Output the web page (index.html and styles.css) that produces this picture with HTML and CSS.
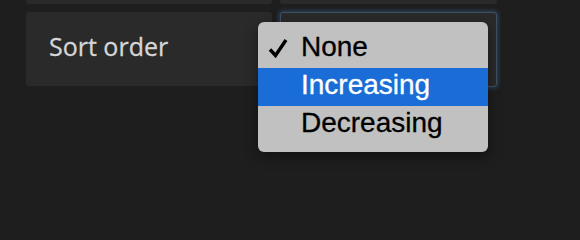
FILE: index.html
```html
<!DOCTYPE html>
<html>
<head>
<meta charset="utf-8">
<link rel="stylesheet" href="styles.css">
</head>
<body>
<div class="grid">
  <div class="panel top"></div>
  <div class="panel top"></div>
  <div class="panel field"><span class="label">Sort order</span></div>
  <div class="select"></div>
</div>
<div class="menu">
  <div class="item checked">
    <svg class="check" width="20" height="20" viewBox="0 0 20 20"><path d="M2 11.5 L7.5 17.5 L18 2" fill="none" stroke="#000" stroke-width="3.4" stroke-linecap="butt" stroke-linejoin="miter"/></svg>
    None
  </div>
  <div class="item active">Increasing</div>
  <div class="item">Decreasing</div>
</div>
</body>
</html>
```
FILE: styles.css
```css
html, body {
  margin: 0;
  padding: 0;
  background: #1f1e1e;
  width: 580px;
  height: 214px;
  overflow: hidden;
}
.grid {
  display: grid;
  grid-template-columns: 246px 217px;
  column-gap: 8px;
  row-gap: 8px;
  margin-top: -26px;
  padding-left: 26px;
  align-items: start;
}
.panel {
  background: #2a2a2a;
  border-radius: 3px;
}
.top {
  height: 30px;
}
.field {
  height: 74px;
  display: flex;
  align-items: center;
  padding-left: 23px;
  box-sizing: border-box;
}
.label {
  font-family: "Open Sans", sans-serif;
  font-size: 25px;
  line-height: 25px;
  color: #d6d6d6;
  padding-bottom: 6px;
  -webkit-text-stroke: 0.3px #d6d6d6;
}
.select {
  height: 75px;
  box-sizing: border-box;
  background: #2a2a2a;
  border: 1px solid #3f5064;
  border-radius: 3px;
  box-shadow: 0 0 4px 1px rgba(60, 115, 170, 0.5);
}
.menu {
  position: absolute;
  left: 258px;
  top: 22px;
  width: 230px;
  height: 130px;
  box-sizing: border-box;
  padding: 8px 0;
  background: #c1c1c1;
  border-radius: 6px;
  box-shadow: 0 4px 14px rgba(0, 0, 0, 0.45);
  font-family: "Liberation Sans", Arial, sans-serif;
  font-size: 28px;
  color: #000;
  -webkit-text-stroke: 0.3px #000;
}
.item {
  position: relative;
  height: 38px;
  box-sizing: border-box;
  line-height: 33px;
  padding-bottom: 5px;
  padding-left: 43px;
}
.item.active {
  background: #1a6dd6;
  color: #fff;
  -webkit-text-stroke: 0.3px #fff;
}
.check {
  position: absolute;
  left: 10px;
  top: 8px;
}
```
